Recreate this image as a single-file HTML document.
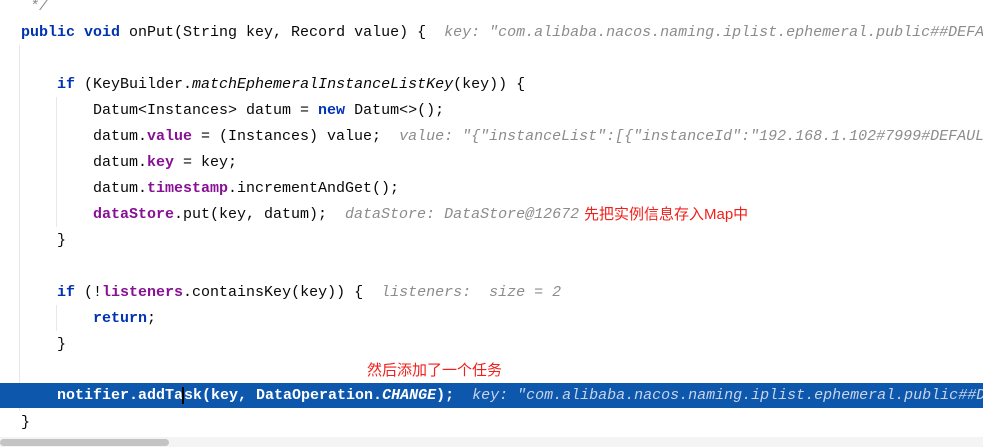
<!DOCTYPE html>
<html><head><meta charset="utf-8"><style>
html,body{margin:0;width:983px;height:447px;overflow:hidden}
body{background:#fff;position:relative;font-family:"Liberation Mono",monospace;font-size:15px;color:#080808}
#w{position:absolute;left:0;top:0;width:983px;height:447px;overflow:hidden}
.l{position:absolute;left:21px;height:26px;line-height:26px;white-space:pre}
.k{color:#0033b3;font-weight:bold}
.f{color:#871094;font-weight:bold}
.i{font-style:italic}
.h{color:#8c8c8c;font-style:italic}
.r{position:absolute;color:#f0201c;font-family:"Liberation Sans","Noto Sans CJK SC",sans-serif;font-size:15px;white-space:nowrap}
.g{position:absolute;width:1px;background:#e8e8e8}
</style></head><body><div id="w">
<div class="g" style="left:19px;top:45px;height:366px"></div>
<div class="g" style="left:56px;top:97px;height:130px"></div>
<div class="g" style="left:56px;top:305px;height:26px"></div>
<div style="position:absolute;left:0;top:383px;width:983px;height:25px;background:#0d57ad"></div>
<div class="l h" style="top:-6px;left:30px">*/</div>
<div class="l" style="top:20px"><span class="k">public void</span> onPut(String key, Record value) {  <span class="h">key: "com.alibaba.nacos.naming.iplist.ephemeral.public##DEFAULT</span></div>
<div class="l" style="top:72px;left:57px"><span class="k">if</span> (KeyBuilder.<span class="i">matchEphemeralInstanceListKey</span>(key)) {</div>
<div class="l" style="top:98px;left:93px">Datum&lt;Instances&gt; datum = <span class="k">new</span> Datum&lt;&gt;();</div>
<div class="l" style="top:124px;left:93px">datum.<span class="f">value</span> = (Instances) value;  <span class="h">value: "{"instanceList":[{"instanceId":"192.168.1.102#7999#DEFAULT</span></div>
<div class="l" style="top:150px;left:93px">datum.<span class="f">key</span> = key;</div>
<div class="l" style="top:176px;left:93px">datum.<span class="f">timestamp</span>.incrementAndGet();</div>
<div class="l" style="top:202px;left:93px"><span class="f">dataStore</span>.put(key, datum);  <span class="h">dataStore: DataStore@12672</span></div>
<div class="r" style="left:584px;top:203px">先把实例信息存入Map中</div>
<div class="l" style="top:228px;left:57px">}</div>
<div class="l" style="top:280px;left:57px"><span class="k">if</span> (!<span class="f">listeners</span>.containsKey(key)) {  <span class="h">listeners:  size = 2</span></div>
<div class="l" style="top:306px;left:93px"><span class="k">return</span>;</div>
<div class="l" style="top:332px;left:57px">}</div>
<div class="r" style="left:367px;top:359px">然后添加了一个任务</div>
<div class="l" style="top:383px;left:57px;color:#fff;font-weight:bold;height:25px;line-height:26px">notifier.addTa<span style="border-left:2px solid #000;margin-left:-1px"></span>sk(key, DataOperation.<span class="i">CHANGE</span>);  <span style="color:#c8d4e8;font-weight:normal" class="i">key: "com.alibaba.nacos.naming.iplist.ephemeral.public##DEFAULT</span></div>
<div class="l" style="top:410px">}</div>
<div style="position:absolute;left:0;top:437px;width:983px;height:10px;background:#f4f4f4"></div>
<div style="position:absolute;left:0;top:439px;width:169px;height:7px;border-radius:4px;background:#c4c4c4"></div>
</div></body></html>
